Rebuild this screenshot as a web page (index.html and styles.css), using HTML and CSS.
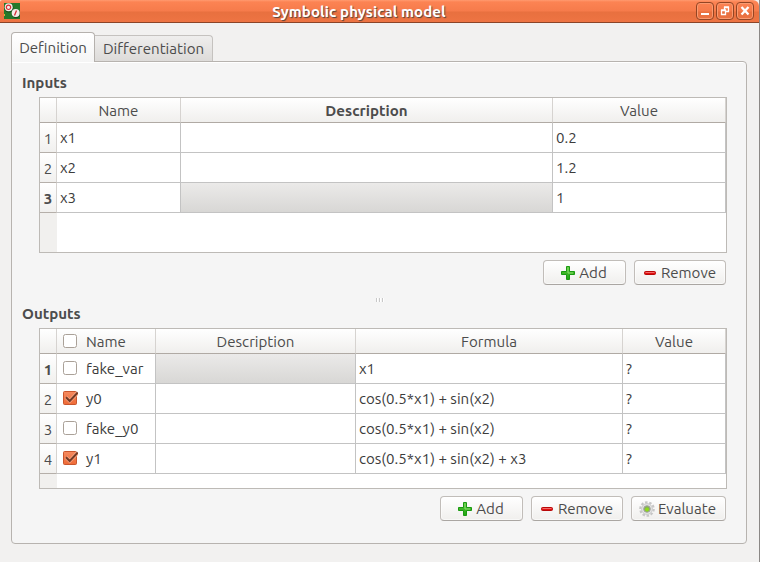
FILE: index.html
```
<!DOCTYPE html>
<html lang="en">
<head>
<meta charset="utf-8">
<title>Symbolic physical model</title>
<link rel="stylesheet" href="styles.css">
</head>
<body>
<svg width="0" height="0" class="defs">
  <defs>
    <linearGradient id="green" x1="0" y1="0" x2="0" y2="1"><stop offset="0" stop-color="#5cc83c"/><stop offset="1" stop-color="#1fa512"/></linearGradient>
    <linearGradient id="orange" x1="0" y1="0" x2="0" y2="1"><stop offset="0" stop-color="#f58b60"/><stop offset="1" stop-color="#ee6b37"/></linearGradient>
    <symbol id="plus" viewBox="0 0 16 16"><path d="M6.500 1.500h3v5h5v3h-5v5h-3v-5h-5v-3h5z" fill="url(#green)" stroke="#1b9a12" stroke-linejoin="round"/><path d="M8 2.500V8H13" fill="none" stroke="#8ade6c"/></symbol>
    <symbol id="minus" viewBox="0 0 16 16"><rect x="2.500" y="6.500" width="11" height="3" rx="1" fill="#e01010" stroke="#b80808"/><path d="M3.500 7.500h9" stroke="#f46a6a"/></symbol>
    <symbol id="gear" viewBox="0 0 16 16"><circle cx="8" cy="8" r="6.700" fill="none" stroke="#c6c6c6" stroke-width="2.200" stroke-dasharray="2.500 1.700"/><circle cx="8" cy="8" r="5.400" fill="#e4e4e4" stroke="#cbcbcb"/><circle cx="8" cy="8" r="3.300" fill="#87aa62" stroke="#a5a5a5"/><circle cx="8" cy="8.500" r="2" fill="#8edb1b"/></symbol>
    <symbol id="box" viewBox="0 0 16 16"><rect x="1.500" y="1.500" width="13" height="13" rx="2" fill="#fff" stroke="#aaa198"/></symbol>
    <symbol id="checked" viewBox="0 0 16 16"><rect x="1.500" y="1.500" width="13" height="13" rx="1" fill="url(#orange)" stroke="#c9562d"/><path d="M4 7.200l3.700 3.800L15.300 3" fill="none" stroke="#f9a785" stroke-width="3.600"/><path d="M4 7.200l3.700 3.800L15.800 2.500" fill="none" stroke="#743a25" stroke-width="2"/></symbol>
  </defs>
</svg>
<div class="window">
  <header class="titlebar">
    <svg class="appicon" width="16" height="16" viewBox="0 0 16 16"><rect width="16" height="16" fill="#25782a"/><circle cx="5" cy="5" r="4.500" fill="#174f1c"/><circle cx="12" cy="11" r="4.300" fill="#174f1c"/><circle cx="4.700" cy="4.200" r="4" fill="#f5eeea"/><circle cx="4.500" cy="4.300" r="2.200" fill="none" stroke="#d62c35" stroke-width="1.200"/><circle cx="11.700" cy="10" r="4" fill="#f5eeea"/><path d="M10.500 12.500l2-5" stroke="#d62c35" stroke-width="1.300"/><path d="M0 11h1v2H0z" fill="#d2bc33"/></svg>
    <h1>Symbolic physical model</h1>
    <div class="controls">
      <span class="ctl"><svg width="16" height="16"><path d="M4 10h8v2H4z" fill="#fff"/></svg></span>
      <span class="ctl"><svg width="16" height="16" fill="none" stroke="#fff"><path d="M7.500 7V4.500h4v4H9M7 4h5" stroke-width="1.300"/><path d="M4.500 7.500h4v4h-4zM4 7h5" stroke-width="1.300"/></svg></span>
      <span class="ctl"><svg width="16" height="16"><path d="M4.500 4l7 7.500M11.500 4l-7 7.500" stroke="#fff" stroke-width="2.300"/></svg></span>
    </div>
  </header>
  <main>
    <nav class="tabs"><div class="tab active">Definition</div><div class="tab">Differentiation</div></nav>
    <div class="pane">
      <h2>Inputs</h2>
      <div class="table inputs">
        <div class="row head"><b class="idx"></b><div>Name</div><div class="bold">Description</div><div>Value</div></div>
        <div class="row"><b class="idx">1</b><div>x1</div><div></div><div>0.2</div></div>
        <div class="row"><b class="idx">2</b><div>x2</div><div></div><div>1.2</div></div>
        <div class="row"><b class="idx bold">3</b><div>x3</div><div class="sel"></div><div>1</div></div>
        <div class="rest"></div>
      </div>
      <div class="buttons">
        <button class="add"><svg><use href="#plus"/></svg><span>Add</span></button>
        <button class="remove"><svg><use href="#minus"/></svg><span>Remove</span></button>
      </div>
      <div class="grip"><i></i><i></i><i></i></div>
      <h2>Outputs</h2>
      <div class="table outputs">
        <div class="row head"><b class="idx"></b><div class="check"><svg><use href="#box"/></svg>Name</div><div>Description</div><div>Formula</div><div>Value</div></div>
        <div class="row"><b class="idx bold">1</b><div class="check"><svg><use href="#box"/></svg>fake_var</div><div class="sel"></div><div>x1</div><div>?</div></div>
        <div class="row"><b class="idx">2</b><div class="check"><svg><use href="#checked"/></svg>y0</div><div></div><div>cos(0.5*x1) + sin(x2)</div><div>?</div></div>
        <div class="row"><b class="idx">3</b><div class="check"><svg><use href="#box"/></svg>fake_y0</div><div></div><div>cos(0.5*x1) + sin(x2)</div><div>?</div></div>
        <div class="row"><b class="idx">4</b><div class="check"><svg><use href="#checked"/></svg>y1</div><div></div><div>cos(0.5*x1) + sin(x2) + x3</div><div>?</div></div>
        <div class="rest"></div>
      </div>
      <div class="buttons">
        <button class="add"><svg><use href="#plus"/></svg><span>Add</span></button>
        <button class="remove"><svg><use href="#minus"/></svg><span>Remove</span></button>
        <button class="evaluate"><svg><use href="#gear"/></svg><span>Evaluate</span></button>
      </div>
    </div>
  </main>
</div>
</body>
</html>
```
FILE: styles.css
```
* { box-sizing: border-box; }
body { margin: 0; background: #f2f1f0; color: #4c4c4c; font: 15.1px/18px Ubuntu, "Noto Sans", sans-serif; }
.defs { position: absolute; }
.window { width: 760px; height: 562px; overflow: hidden; border-right: 1px solid #8b8886; background: #f2f1f0; }
.titlebar { display: grid; grid-template-columns: 23px 1fr 64px; height: 23px; border-bottom: 1px solid #8b4428; background: linear-gradient(#ff9a70 0, #fc8353 2px, #f67b4b 11px, #e8703f 12px, #ee7443 22px); border-radius: 2px 6px 0 0; }
.appicon { margin: 3px 0 0 4px; }
h1 { margin: 0; padding-top: 3px; text-align: center; font-size: 15px; line-height: 18px; color: #fff; text-shadow: 1px 1px 1px #54433c; letter-spacing: .1px; }
.controls { display: flex; gap: 2px; padding: 2px 0 0 1px; }
.ctl { width: 18px; height: 18px; border: 1px solid #934524; border-radius: 4px; box-shadow: inset 0 0 0 1px #fb9a70; }
.ctl svg { display: block; }
main { padding: 9px 12px 0 11px; }
.tabs { display: flex; align-items: flex-end; height: 29px; }
.tab { height: 26px; width: 118px; padding-top: 4px; text-align: center; border: 1px solid #c5c2bf; border-left: 0; border-bottom: 0; border-radius: 0 4px 0 0; background: linear-gradient(#efeeed, #dddbd9); }
.tab.active { position: relative; z-index: 1; width: 84px; height: 30px; margin-bottom: -1px; padding-top: 6px; border: 1px solid #b5b1ad; border-bottom: 0; border-radius: 4px 4px 0 0; background: linear-gradient(#fff, #f5f5f5); }
.pane { height: 483px; padding: 12px 19px 0 10px; border: 1px solid #b7b3af; border-radius: 0 4px 4px 4px; background: #f5f5f5; box-shadow: inset 0 1px #fff; }
h2 { margin: 0; height: 18px; font-size: 15.1px; line-height: 18px; }
.table { display: flex; flex-direction: column; margin: 5px 0 0 17px; border: 1px solid #bdbab6; background: #fff; }
.inputs { height: 156px; }
.outputs { height: 161px; }
.row { display: grid; flex: none; height: 30px; }
.inputs .row { grid-template-columns: 17px 124px 372px 173px; }
.outputs .row { grid-template-columns: 17px 99px 200px 267px 103px; }
.row > * { border-right: 1px solid #c3c3c3; border-bottom: 1px solid #c3c3c3; padding: 6px 0 0 3px; color: #3c3c3c; overflow: hidden; white-space: nowrap; }
.row > .idx { padding: 7px 0 0; text-align: center; font-weight: 400; color: #4c4c4c; border-right-color: #d6d3d0; border-bottom-color: #b5afa9; background: linear-gradient(#fff, #f1f0ee); }
.head { height: 25px; }
.row.head > * { padding: 4px 0 0; text-align: center; color: #4c4c4c; border-right-color: #d6d3d0; border-bottom-color: #b0aaa4; background: linear-gradient(#fff, #f0efed); }
.row > .bold, .row.head > .bold { font-weight: 700; }
.row > .sel { background: linear-gradient(#ebeae9, #d8d7d5); }
.row > .check, .row.head > .check { display: flex; padding-left: 5px; text-align: left; }
.check svg { flex: none; width: 16px; height: 16px; margin: 0 8px 0 0; }
.rest { flex: 1; width: 17px; background: #f1f0ee; }
.buttons { display: flex; justify-content: flex-end; gap: 8px; padding-top: 7px; margin-right: 1px; }
button { display: flex; align-items: center; justify-content: center; gap: 3px; height: 25px; padding: 0 2px 0 0; border: 1px solid #c1bdb9; border-bottom-color: #aaa6a2; border-radius: 4px; background: linear-gradient(#fff, #f0efed); box-shadow: inset 0 0 0 1px #fff8; font: inherit; color: #4c4c4c; }
button svg { width: 16px; height: 16px; }
.add { width: 83px; }
.remove { width: 92px; }
.evaluate { width: 95px; }
.grip { display: flex; justify-content: center; gap: 2px; height: 20px; padding: 13px 0 0 9px; }
.grip i { width: 1px; height: 4px; background: #c8c8c8; box-shadow: 1px 0 #fff; }
```
